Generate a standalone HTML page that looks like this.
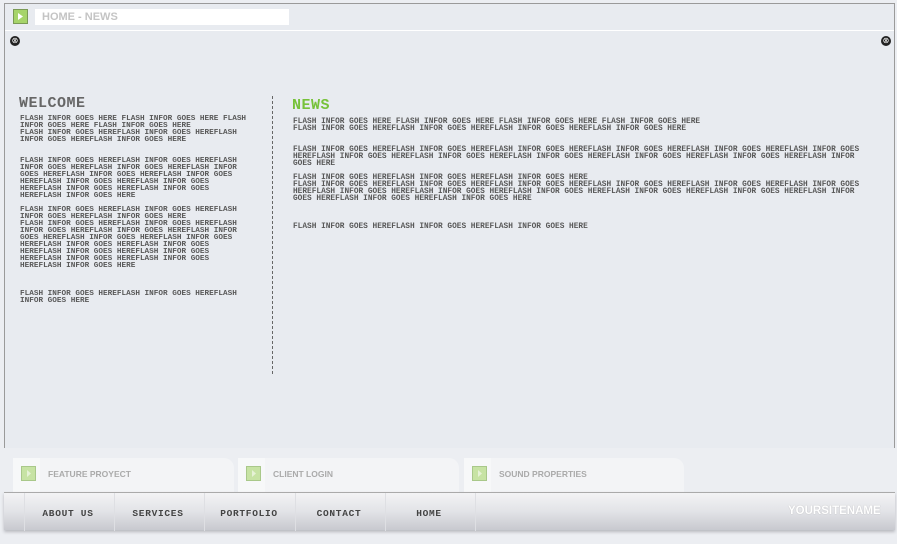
<!DOCTYPE html>
<html><head><style>
*{margin:0;padding:0;box-sizing:border-box}
body{width:897px;height:544px;background:#eceef2;position:relative;overflow:hidden;font-family:"Liberation Sans",sans-serif}
.frame{position:absolute;left:4px;top:3px;width:891px;height:445px;border:1px solid #9a9a9a;border-bottom:none;background:#e8ebf0}
.sep{position:absolute;left:5px;top:30px;width:889px;height:1px;background:#fff}
.ico{position:absolute;width:15px;height:15px;background:#a6d46a;border:1px solid #7a9a55}
.ico:after{content:"";position:absolute;left:4px;top:3px;width:5px;height:7px;background:#fff;clip-path:polygon(0 0,100% 50%,0 100%)}
.addr{position:absolute;left:35px;top:9px;width:254px;height:16px;background:#fff;color:#c4c4c4;font-weight:bold;font-size:11px;padding:2px 7px;line-height:12px}
.x{position:absolute;width:10px;height:10px;border-radius:50%;background:#222;color:#fff;font-size:8px;line-height:10px;text-align:center}
.txt{position:absolute;font-family:"Liberation Mono",monospace;font-size:7.7px;line-height:7px;color:#585858;white-space:pre;font-weight:bold}
.h{position:absolute;font-family:"Liberation Mono",monospace;font-weight:bold;font-size:15px;letter-spacing:0.5px}
.dash{position:absolute;left:272px;top:96px;height:278px;border-left:1px dashed #666}
.tab{position:absolute;top:458px;height:34px;background:#f3f4f6;border-top-right-radius:10px}
.tab .l{position:absolute;left:0;top:0;width:27px;height:34px;background:#f7f8f9}
.tab .i{position:absolute;left:8px;top:8px;width:15px;height:15px;background:#c7e3a4;border:1px solid #a9c88a}
.tab .i:after{content:"";position:absolute;left:5px;top:3px;width:4px;height:7px;background:#e6f2d6;clip-path:polygon(0 0,100% 50%,0 100%)}
.tab span{position:absolute;left:35px;top:11px;font-size:8.5px;font-weight:bold;color:#aaa}
.nav{position:absolute;left:4px;top:492px;width:891px;height:38px;background:linear-gradient(#f3f3f5,#e2e3e7 50%,#c8c9cf);border-top:1px solid #aaa;box-shadow:0 2px 3px #b8b9be}
.nav .d{position:absolute;top:0;width:1px;height:38px;background:#dedfe3}
.nav b{position:absolute;top:15px;font-family:"Liberation Mono",monospace;font-size:9.5px;letter-spacing:0.7px;color:#444;width:90px;text-align:center}
.site{position:absolute;left:788px;top:505px;color:#fff;font-weight:bold;font-size:11.5px;text-shadow:0 0 1px #aaa}
</style></head><body>
<div class="frame"></div>
<div class="sep"></div>
<div class="ico" style="left:13px;top:9px"></div>
<div class="addr">HOME - NEWS</div>
<div class="x" style="left:10px;top:36px">⊗</div>
<div class="x" style="left:881px;top:36px">⊗</div>
<div class="h" style="left:19px;top:95px;color:#666">WELCOME</div>
<div class="h" style="left:292px;top:97px;color:#77c23a">NEWS</div>
<div class="dash"></div>
<div class="txt" style="left:20px;top:116px">FLASH INFOR GOES HERE FLASH INFOR GOES HERE FLASH
INFOR GOES HERE FLASH INFOR GOES HERE
FLASH INFOR GOES HEREFLASH INFOR GOES HEREFLASH
INFOR GOES HEREFLASH INFOR GOES HERE


FLASH INFOR GOES HEREFLASH INFOR GOES HEREFLASH
INFOR GOES HEREFLASH INFOR GOES HEREFLASH INFOR
GOES HEREFLASH INFOR GOES HEREFLASH INFOR GOES
HEREFLASH INFOR GOES HEREFLASH INFOR GOES
HEREFLASH INFOR GOES HEREFLASH INFOR GOES
HEREFLASH INFOR GOES HERE

FLASH INFOR GOES HEREFLASH INFOR GOES HEREFLASH
INFOR GOES HEREFLASH INFOR GOES HERE
FLASH INFOR GOES HEREFLASH INFOR GOES HEREFLASH
INFOR GOES HEREFLASH INFOR GOES HEREFLASH INFOR
GOES HEREFLASH INFOR GOES HEREFLASH INFOR GOES
HEREFLASH INFOR GOES HEREFLASH INFOR GOES
HEREFLASH INFOR GOES HEREFLASH INFOR GOES
HEREFLASH INFOR GOES HEREFLASH INFOR GOES
HEREFLASH INFOR GOES HERE



FLASH INFOR GOES HEREFLASH INFOR GOES HEREFLASH
INFOR GOES HERE</div>
<div class="txt" style="left:293px;top:119px;font-size:7.8px">FLASH INFOR GOES HERE FLASH INFOR GOES HERE FLASH INFOR GOES HERE FLASH INFOR GOES HERE
FLASH INFOR GOES HEREFLASH INFOR GOES HEREFLASH INFOR GOES HEREFLASH INFOR GOES HERE


FLASH INFOR GOES HEREFLASH INFOR GOES HEREFLASH INFOR GOES HEREFLASH INFOR GOES HEREFLASH INFOR GOES HEREFLASH INFOR GOES
HEREFLASH INFOR GOES HEREFLASH INFOR GOES HEREFLASH INFOR GOES HEREFLASH INFOR GOES HEREFLASH INFOR GOES HEREFLASH INFOR
GOES HERE

FLASH INFOR GOES HEREFLASH INFOR GOES HEREFLASH INFOR GOES HERE
FLASH INFOR GOES HEREFLASH INFOR GOES HEREFLASH INFOR GOES HEREFLASH INFOR GOES HEREFLASH INFOR GOES HEREFLASH INFOR GOES
HEREFLASH INFOR GOES HEREFLASH INFOR GOES HEREFLASH INFOR GOES HEREFLASH INFOR GOES HEREFLASH INFOR GOES HEREFLASH INFOR
GOES HEREFLASH INFOR GOES HEREFLASH INFOR GOES HERE



FLASH INFOR GOES HEREFLASH INFOR GOES HEREFLASH INFOR GOES HERE</div>
<div class="tab" style="left:13px;width:221px"><div class="l"></div><div class="i"></div><span>FEATURE PROYECT</span></div>
<div class="tab" style="left:238px;width:221px"><div class="l"></div><div class="i"></div><span>CLIENT LOGIN</span></div>
<div class="tab" style="left:464px;width:220px"><div class="l"></div><div class="i"></div><span>SOUND PROPERTIES</span></div>
<div class="nav">
<div class="d" style="left:20px"></div><div class="d" style="left:110px"></div><div class="d" style="left:200px"></div><div class="d" style="left:291px"></div><div class="d" style="left:381px"></div><div class="d" style="left:471px"></div>
<b style="left:19px">ABOUT US</b><b style="left:109px">SERVICES</b><b style="left:200px">PORTFOLIO</b><b style="left:290px">CONTACT</b><b style="left:380px">HOME</b>
</div>
<div class="site">YOURSITENAME</div>
</body></html>
